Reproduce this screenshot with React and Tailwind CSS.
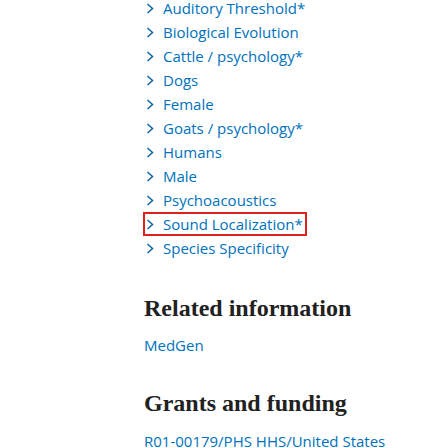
import React from "react";

const items = [
  "Auditory Threshold*",
  "Biological Evolution",
  "Cattle / psychology*",
  "Dogs",
  "Female",
  "Goats / psychology*",
  "Humans",
  "Male",
  "Psychoacoustics",
  "Sound Localization*",
  "Species Specificity",
];

function Chevron() {
  return (
    <svg width="8" height="11" viewBox="0 0 8 11" className="shrink-0">
      <path d="M1.5 1 L6.5 5.5 L1.5 10" fill="none" stroke="#0a64a8" strokeWidth="1.5" />
    </svg>
  );
}

export default function App() {
  const sans = { fontFamily: '"Open Sans", "Noto Sans", sans-serif' };
  const serif = { fontFamily: '"Liberation Serif", "DejaVu Serif", serif' };
  return (
    <div className="w-[448px] h-[448px] overflow-hidden bg-white">
      <div className="pl-[144px] -mt-[4px]" style={sans}>
        <ul className="flex flex-col">
          {items.map((t) => (
            <li key={t} className="h-[24px] flex items-center">
              <a
                className={
                  "flex items-center gap-[9px] pl-[2px] pr-[3px] h-[22px] text-[15px] text-[#0071bc] " +
                  (t === "Sound Localization*" ? "outline-2 outline-[#e0201b] -outline-offset-1" : "")
                }
              >
                <Chevron />
                <span className="block leading-[16px]">{t}</span>
              </a>
            </li>
          ))}
        </ul>
        <h2 className="mt-[34px] text-[24px] font-bold text-[#212121] leading-[28px]" style={serif}>
          Related information
        </h2>
        <div className="mt-[13px] text-[15px] text-[#0071bc] leading-[20px]">MedGen</div>
        <h2 className="mt-[34px] text-[24px] font-bold text-[#212121] leading-[28px]" style={serif}>
          Grants and funding
        </h2>
        <div className="mt-[14px] text-[15px] text-[#0071bc] leading-[20px]">R01-00179/PHS HHS/United States</div>
      </div>
    </div>
  );
}
